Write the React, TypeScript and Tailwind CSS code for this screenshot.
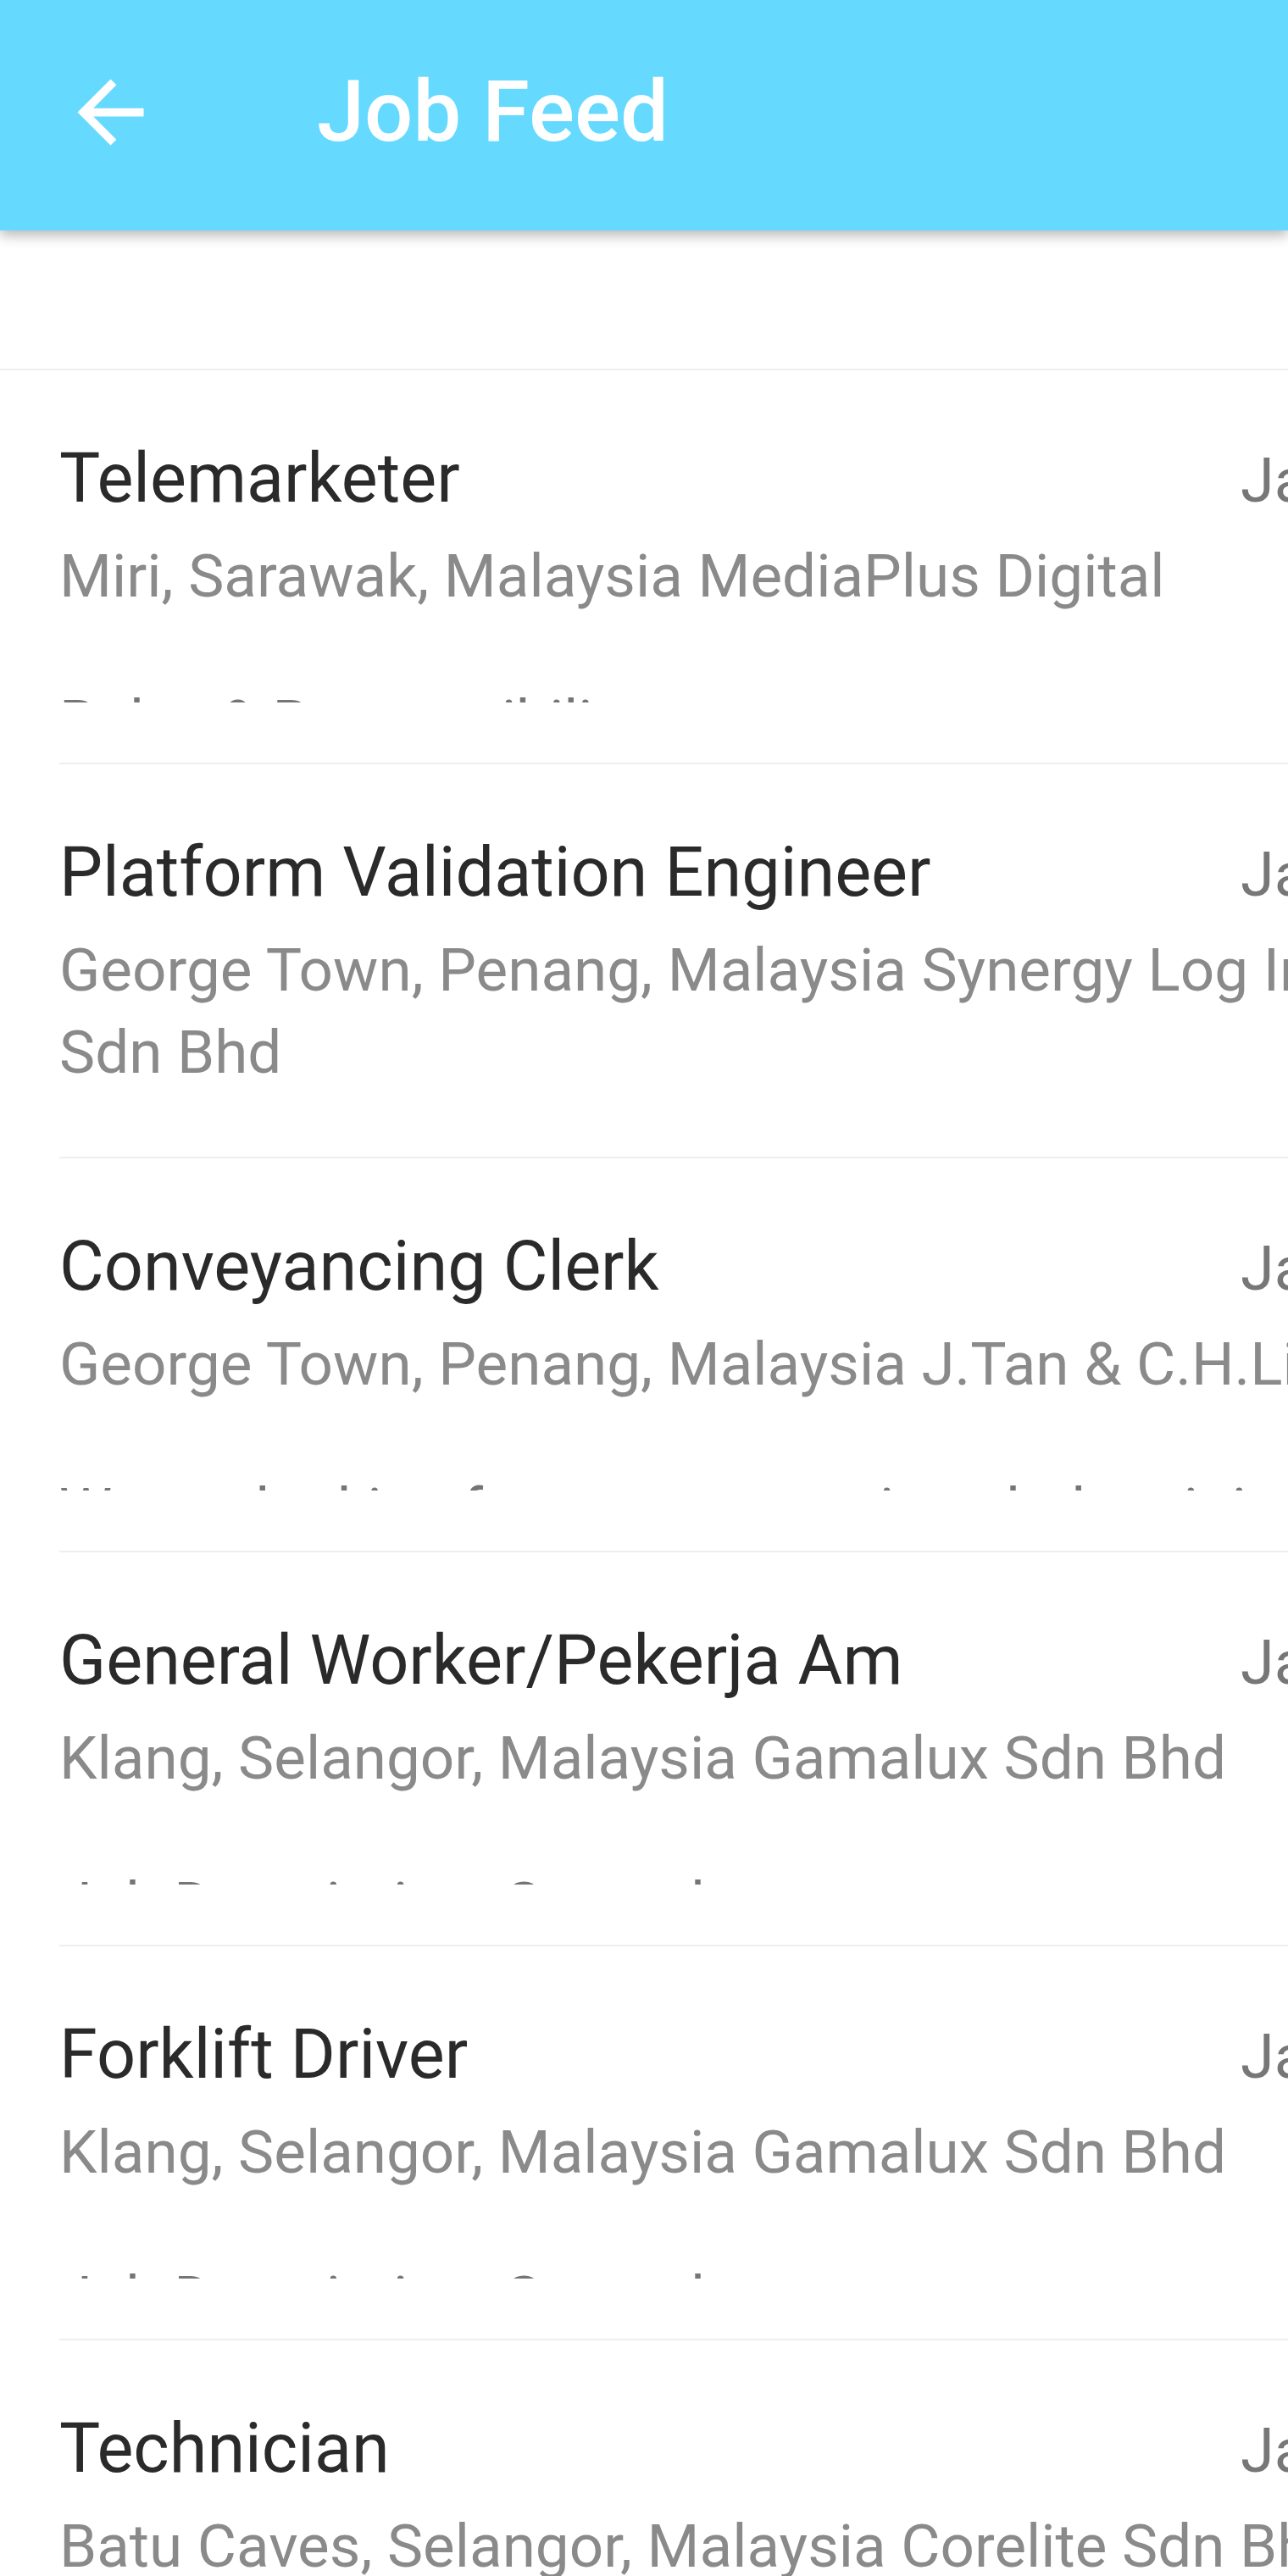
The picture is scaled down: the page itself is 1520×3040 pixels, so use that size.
import React from "react";

type Job = {
  title: string;
  place: string;
  date: string;
  desc: string;
};

const jobs: Job[] = [
  {
    title: "Telemarketer",
    place: "Miri, Sarawak, Malaysia MediaPlus Digital",
    date: "Jan 10",
    desc: "Roles & Responsibility",
  },
  {
    title: "Platform Validation Engineer",
    place: "George Town, Penang, Malaysia Synergy Log International Sdn Bhd",
    date: "Jan 10",
    desc: "Job Description",
  },
  {
    title: "Conveyancing Clerk",
    place: "George Town, Penang, Malaysia J.Tan & C.H.Lim",
    date: "Jan 10",
    desc: "We are looking for a conveyancing clerk to join our team",
  },
  {
    title: "General Worker/Pekerja Am",
    place: "Klang, Selangor, Malaysia Gamalux Sdn Bhd",
    date: "Jan 10",
    desc: "Job Description: General",
  },
  {
    title: "Forklift Driver",
    place: "Klang, Selangor, Malaysia Gamalux Sdn Bhd",
    date: "Jan 10",
    desc: "Job Description: General",
  },
  {
    title: "Technician",
    place: "Batu Caves, Selangor, Malaysia Corelite Sdn Bhd",
    date: "Jan 10",
    desc: "Job Description",
  },
];

function JobRow({ job }: { job: Job }) {
  return (
    <div className="ml-[70px] h-[465px] border-b-2 border-[#eeeeee]">
      <div className="h-[392px] w-[1900px] overflow-hidden pt-[82px]">
        <div className="flex items-baseline">
          <div className="w-[1394px] shrink-0 text-[81px] leading-[92px] text-[#2a2a2a]">
            {job.title}
          </div>
          <div className="text-[72px] leading-[92px] text-[#777777]">{job.date}</div>
        </div>
        <div className="mt-[17px] w-[1880px] text-[71px] leading-[97px] text-[#8a8a8a]">
          {job.place}
        </div>
        <div className="mt-[76px] text-[70px] leading-[97px] text-[#757575]">{job.desc}</div>
      </div>
    </div>
  );
}

export default function App() {
  return (
    <div className="h-[3040px] w-[1520px] overflow-hidden bg-white font-['Roboto','Liberation_Sans',sans-serif]">
      {/* Toolbar */}
      <header className="relative z-10 flex h-[272px] items-center bg-[#66d9ff] pb-[8px] shadow-[0_6px_14px_rgba(0,0,0,0.28)]">
        <svg className="ml-[72px] h-[117px] w-[117px] fill-white" viewBox="0 0 24 24">
          <path d="M20 11H7.83l5.59-5.59L12 4l-8 8 8 8 1.41-1.41L7.83 13H20v-2z" />
        </svg>
        <h1 className="ml-[185px] text-[101px] font-medium text-white">Job Feed</h1>
      </header>

      <div className="h-[163px]" />
      <div className="h-[2px] bg-[#eeeeee]" />

      {jobs.map((job, i) => (
        <JobRow key={i} job={job} />
      ))}
    </div>
  );
}
